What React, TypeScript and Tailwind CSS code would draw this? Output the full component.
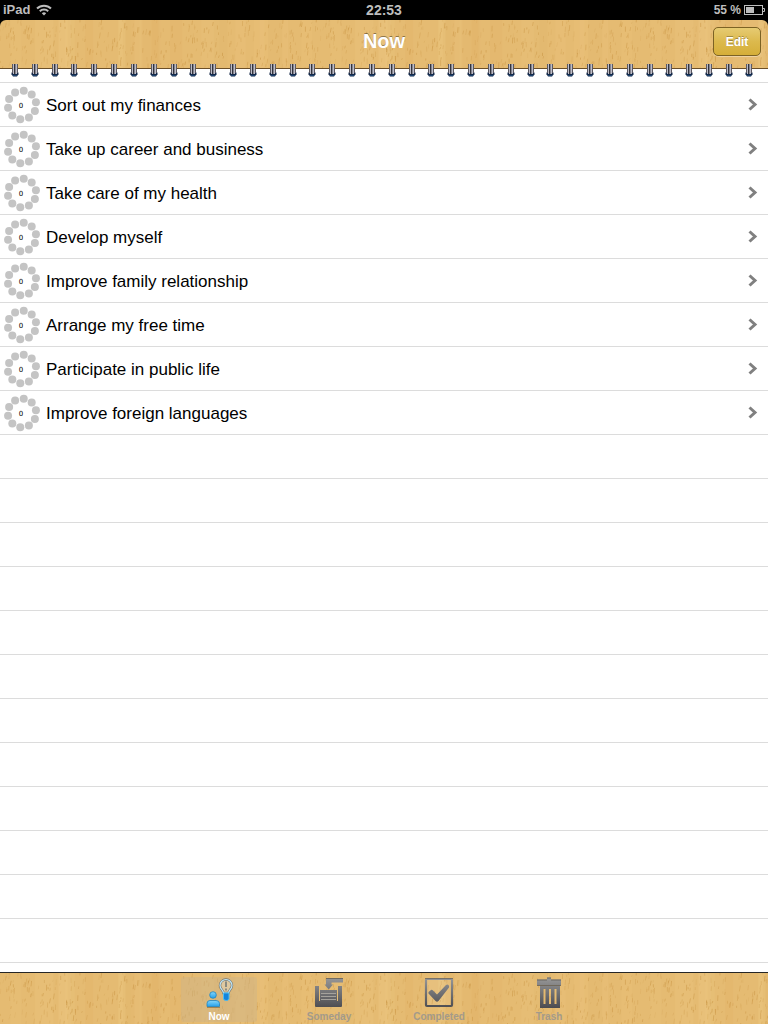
import { useId, type ReactNode } from "react";

const goals = [
  "Sort out my finances",
  "Take up career and business",
  "Take care of my health",
  "Develop myself",
  "Improve family relationship",
  "Arrange my free time",
  "Participate in public life",
  "Improve foreign languages",
];

function randomSource(seed: number) {
  let s = seed;
  return () => {
    s = (s * 16807) % 2147483647;
    return s / 2147483647;
  };
}

const TILE = 320;
const rand = randomSource(4177);
const bands = Array.from({ length: 22 }, () => ({
  x: rand() * TILE,
  w: 4 + rand() * 16,
  o: 0.06 + rand() * 0.14,
  light: rand() > 0.45,
}));
const flecks = Array.from({ length: 420 }, () => ({
  x: rand() * TILE,
  y: rand() * 54 - 2,
  h: 2 + rand() * 4,
  lean: rand() * 1.2 - 1,
  o: 0.12 + rand() * 0.4,
}));

function Wood() {
  const id = useId();
  return (
    <svg className="absolute inset-0 -z-10 h-full w-full" aria-hidden="true">
      <defs>
        <pattern id={id} width={TILE} height="54" patternUnits="userSpaceOnUse">
          <rect width={TILE} height="54" fill="#e5bb72" />
          {bands.map((b, i) => (
            <rect key={i} x={b.x} width={b.w} height="54" fill={b.light ? "#f0cb88" : "#d9a75c"} opacity={b.o} />
          ))}
          {flecks.map((f, i) => (
            <path
              key={i}
              d={`M${f.x} ${f.y}l${f.lean} ${f.h}`}
              stroke="#c8923f"
              strokeWidth="1"
              opacity={f.o}
            />
          ))}
        </pattern>
      </defs>
      <rect width="100%" height="100%" fill={`url(#${id})`} />
    </svg>
  );
}

function Ring() {
  return (
    <svg width="8" height="14" viewBox="0 0 8 14" aria-hidden="true">
      <path d="M.5 8.500h7v1.800L6 12.500H2L.5 10.300z" fill="#14294a" />
      <path d="M1.500 0v9M6.500 0v9" stroke="#5c5960" />
      <path d="M2.500 0v10M5.500 0v10" stroke="#bcbcc8" />
      <path d="M3.500 0v10" stroke="#33333b" />
      <path d="M4.500 0v10" stroke="#85858f" />
      <path d="M2 11.500h4" stroke="#1f4570" />
    </svg>
  );
}

const dots = Array.from({ length: 10 }, (_, i) => {
  const a = ((7 + i * 36) * Math.PI) / 180;
  return { x: 20 + 14.2 * Math.sin(a), y: 20 - 14.4 * Math.cos(a) };
});

function Progress() {
  return (
    <svg width="40" height="40" viewBox="0 0 40 40" role="img" aria-label="Progress 0">
      {dots.map((d, i) => (
        <circle key={i} cx={d.x} cy={d.y} r="4" fill="#c4c4c4" />
      ))}
      <text x="19" y="23" textAnchor="middle" fontSize="7" fontFamily="DejaVu Sans, sans-serif" fill="#000">
        0
      </text>
    </svg>
  );
}

function NowIcon() {
  return (
    <svg width="32" height="32" viewBox="0 0 32 32" aria-hidden="true">
      <defs>
        <linearGradient id="blue" x1="0" y1="0" x2="0" y2="1">
          <stop offset="0" stopColor="#85d6fa" />
          <stop offset="1" stopColor="#24a0ea" />
        </linearGradient>
      </defs>
      <path d="M4 31.500h13" stroke="#8d7040" opacity=".7" />
      <circle cx="10" cy="19" r="3.300" fill="url(#blue)" stroke="#2384bd" strokeWidth=".8" />
      <path d="M4 30.500V27.500q0-3 3-3h6q3.500 0 3.500 3v3z" fill="url(#blue)" stroke="#2384bd" strokeWidth=".8" />
      <path d="M20.500 17C20.300 14 17 13 17 9.500a6 6 0 0 1 12 0C29 13 25.800 14 25.500 17z" fill="#dfc9a0" stroke="#77756c" strokeWidth="2.400" />
      <path d="M20.500 17C20.300 14 17 13 17 9.500a6 6 0 0 1 12 0C29 13 25.800 14 25.500 17z" fill="none" stroke="#bfe6f7" strokeWidth="1.200" />
      <path d="M23 5.500v5.500M23 12.500v2" stroke="#5b6a72" strokeWidth="1.300" />
      <path d="M20.500 17h5.500v6q-.5 1.500-2.700 1.500T20.500 23z" fill="#1484dc" stroke="#4dbcf2" />
    </svg>
  );
}

function GreyGradient({ id }: { id: string }) {
  return (
    <defs>
      <linearGradient id={id} x1="0" y1="0" x2="0" y2="32" gradientUnits="userSpaceOnUse">
        <stop offset="0" stopColor="#9c9c9c" />
        <stop offset="1" stopColor="#4c4c50" />
      </linearGradient>
    </defs>
  );
}

function SomedayIcon() {
  return (
    <svg width="32" height="32" viewBox="0 0 32 32" aria-hidden="true">
      <GreyGradient id="tray" />
      <path d="M2 10h4v15h19V10h4v20q0 1-1 1H3q-1 0-1-1z" fill="url(#tray)" />
      <path d="M7 14h17v12H7z" fill="url(#tray)" />
      <path d="M8 17.500h15M8 20.500h15M8 23.500h15" stroke="#a5a29c" />
      <path d="M13 2.500h17v4H18.500v2H20l-4.300 5L11.500 8.500H13z" fill="url(#tray)" />
      <path d="M13 2.500h17" stroke="#6f6a60" />
    </svg>
  );
}

function CompletedIcon() {
  return (
    <svg width="32" height="32" viewBox="0 0 32 32" aria-hidden="true">
      <GreyGradient id="check" />
      <rect x="3" y="3" width="26" height="27" rx="1" fill="#fff" fillOpacity=".08" stroke="url(#check)" strokeWidth="2.200" />
      <path d="M5.500 16l2.500-2q1-.5 2 .5l4 4L23 9q1.500-1 2.500 0t.5 2.500L15.500 25q-1.500 1.500-3 0l-7-7.500z" fill="url(#check)" />
      <path d="M2 2.500h28" stroke="#6f675a" strokeWidth=".8" />
    </svg>
  );
}

function TrashIcon() {
  return (
    <svg width="32" height="32" viewBox="0 0 32 32" aria-hidden="true">
      <GreyGradient id="trash" />
      <path
        d="M4 3.500h10V1.500h4v2h10V9H4zM7 9.500h20V32H7zM10.500 13v15h2V13zM16 13v15h2V13zM21.500 13v15h2V13z"
        fill="url(#trash)"
        fillRule="evenodd"
      />
      <path d="M4 4h10M18 4h10M14 2h4M4 9.500h24" stroke="#5f5b53" strokeWidth=".8" />
    </svg>
  );
}

const tabs: { label: string; icon: ReactNode }[] = [
  { label: "Now", icon: <NowIcon /> },
  { label: "Someday", icon: <SomedayIcon /> },
  { label: "Completed", icon: <CompletedIcon /> },
  { label: "Trash", icon: <TrashIcon /> },
];

function StatusBar() {
  return (
    <div className="grid h-5 shrink-0 grid-cols-3 items-center bg-black px-[3px] text-sm font-bold text-[#bdbdbd]">
      <div className="flex items-center gap-[6px] text-[13px]">
        <span className="font-bold">iPad</span>
        <svg width="16" height="12" viewBox="0 0 16 12" fill="none" stroke="#bdbdbd" aria-label="Wi-Fi" role="img">
          <path d="M1 4.500a10 10 0 0 1 14 0" strokeWidth="2" />
          <path d="M3.800 7.300a6 6 0 0 1 8.400 0" strokeWidth="2" />
          <path d="M8 11.500L5.800 9.300a3.100 3.100 0 0 1 4.400 0z" fill="#bdbdbd" stroke="none" />
        </svg>
      </div>
      <time className="text-center">22:53</time>
      <div className="flex items-center justify-end gap-[3px] text-xs">
        <span>55 %</span>
        <svg width="21" height="10" viewBox="0 0 21 10" role="img" aria-label="Battery">
          <rect x=".5" y=".5" width="18" height="9" fill="none" stroke="#bdbdbd" />
          <rect x="2" y="2" width="8" height="6" fill="#bdbdbd" />
          <path d="M19 3.500h1.500v3H19" fill="none" stroke="#bdbdbd" />
        </svg>
      </div>
    </div>
  );
}

export default function App() {
  return (
    <div className="flex h-screen flex-col overflow-hidden bg-black font-['Liberation_Sans',Arial,sans-serif]">
      <StatusBar />
      <header className="relative isolate grid h-[49px] shrink-0 grid-cols-3 items-start overflow-hidden rounded-t-md border-b border-[#6b4f28] px-[7px] pt-[7px]">
        <Wood />
        <h1 className="col-start-2 text-center text-xl leading-7 font-bold text-white [text-shadow:0_-1px_0_rgba(0,0,0,0.4)]">Now</h1>
        <button
          type="button"
          className="h-[29px] w-12 justify-self-end rounded-[5px] border border-[#7c6224] bg-linear-to-b from-[#e6cb72] via-[#dcb94d] to-[#d5ae38] text-xs font-bold text-white shadow-[0_1px_0_rgba(255,255,255,0.35)] [text-shadow:0_-1px_0_rgba(0,0,0,0.3)]"
        >
          Edit
        </button>
      </header>
      <main className="flex min-h-0 flex-1 flex-col bg-white">
        <div className="flex h-[14px] shrink-0 items-end border-b border-[#dcdcdc]">
          <div className="relative -top-1 flex w-full justify-between pr-[15px] pl-[11px]">
            {Array.from({ length: 38 }, (_, i) => (
              <Ring key={i} />
            ))}
          </div>
        </div>
        <ul className="min-h-0 flex-1 overflow-hidden">
          {goals.map((goal) => (
            <li key={goal} className="h-11 border-b border-[#dcdcdc]">
              <a href="#goal" className="flex h-full items-center gap-1 pr-[10px] pl-[2px] text-[17px] text-black">
                <Progress />
                <span className="flex-1 pt-[2px]">{goal}</span>
                <svg width="10" height="14" viewBox="0 0 10 14" fill="none" stroke="#808080" strokeWidth="3" aria-hidden="true">
                  <path d="M1.500 1.500L7 6.500l-5.500 5" />
                </svg>
              </a>
            </li>
          ))}
          {Array.from({ length: 13 }, (_, i) => (
            <li key={i} aria-hidden="true" className="h-11 border-b border-[#dcdcdc]" />
          ))}
        </ul>
      </main>
      <nav className="relative isolate flex h-[52px] shrink-0 justify-center gap-[34px] border-t border-[#262626] pt-1 pb-[2px] shadow-[inset_0_1px_0_#f6e5c5]">
        <Wood />
        {tabs.map((tab, i) => (
          <button
            key={tab.label}
            type="button"
            aria-current={i === 0 ? "page" : undefined}
            className={
              i === 0
                ? "flex w-[76px] flex-col items-center rounded-[3px] bg-[#cdb48a]/45 text-[10px] leading-3 font-bold text-white"
                : "flex w-[76px] flex-col items-center rounded-[3px] text-[10px] leading-3 font-bold text-[#a39a8a]"
            }
          >
            <span className="-mt-px">{tab.icon}</span>
            <span className="pt-[3px]">{tab.label}</span>
          </button>
        ))}
      </nav>
    </div>
  );
}
